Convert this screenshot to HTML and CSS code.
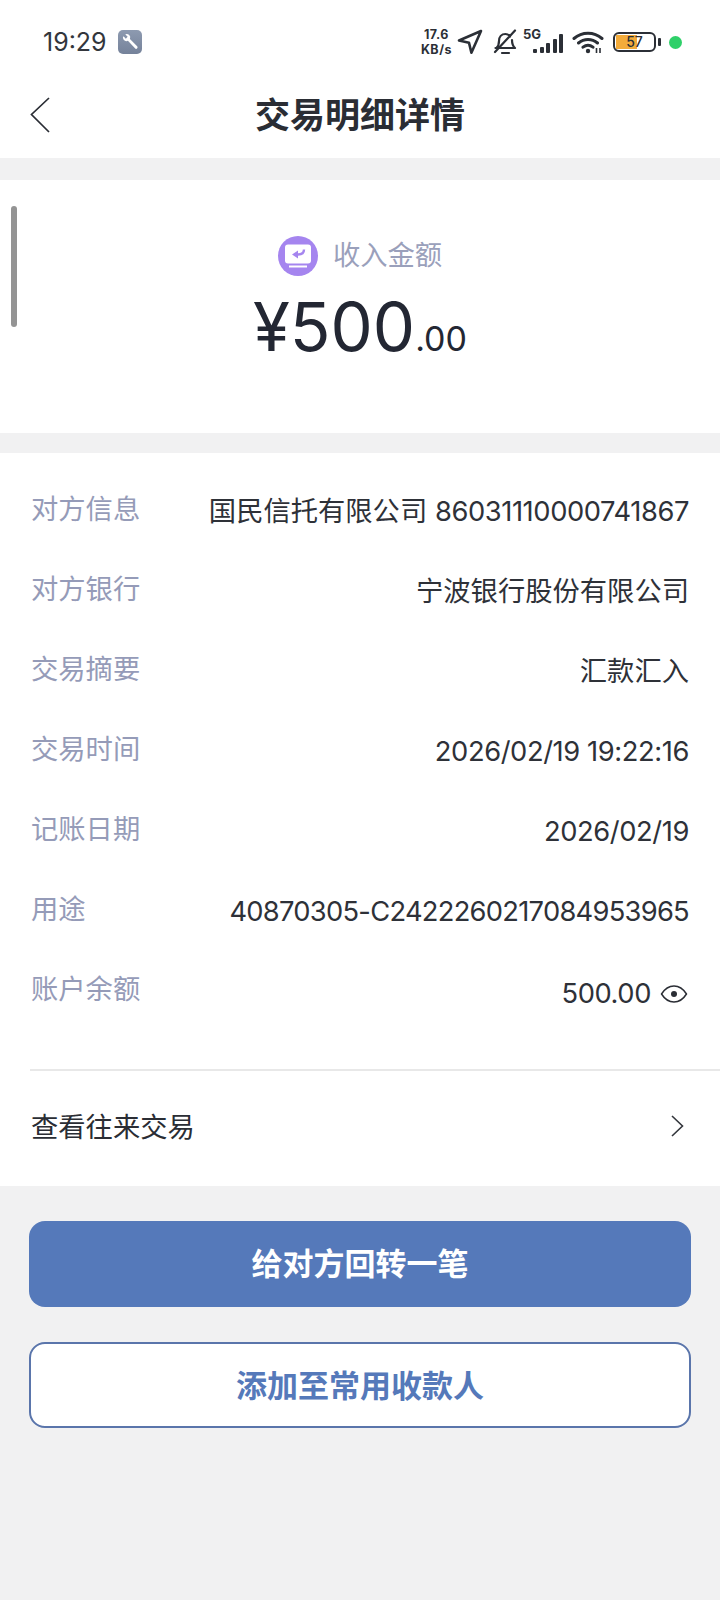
FILE: index.html
```html
<!DOCTYPE html>
<html lang="zh-CN">
<head>
<meta charset="utf-8">
<title>交易明细详情</title>
<link rel="stylesheet" href="styles.css">
</head>
<body>
<div class="page">
  <header class="top">
    <div class="status">
      <div class="status-left">
        <span class="clock">19:29</span>
        <span class="tool-badge">
          <svg viewBox="0 0 24 24" width="20" height="20"><path d="M3.500 6.600a4.300 4.300 0 0 0 6 4l8.500 9a1.700 1.700 0 0 0 2.600-2.400l-8.700-8.800A4.300 4.300 0 0 0 6.300 2.700L9.200 5.600 7 8 4.200 5z" fill="#fff"/></svg>
        </span>
      </div>
      <div class="status-right">
        <span class="speed">17.6<br>KB/s</span>
        <svg class="ic-loc" viewBox="0 0 26 26" width="26" height="26"><path d="M24 2 2 11.500l10 2.200 2.400 10z" fill="none" stroke="#2b2f36" stroke-width="2.600" stroke-linejoin="round"/></svg>
        <svg class="ic-bell" viewBox="0 0 26 26" width="26" height="26"><path d="M4.500 19c2-2 2.500-4 2.500-7 0-4 2.500-7 6.500-7 2 0 3.500 1 4.500 2.500M20 11c0 3.500.6 6 3 8H3.500M10 24h7M3 23 23 1.500" fill="none" stroke="#2b2f36" stroke-width="2.200" stroke-linecap="round" stroke-linejoin="round"/></svg>
        <span class="signal">
          <span class="fiveg">5G</span>
          <span class="bars"><i class="b1"></i><i class="b2"></i><i class="b3"></i><i class="b4"></i><i class="b5"></i></span>
        </span>
        <svg class="ic-wifi" viewBox="0 0 32 24" width="32" height="24"><path d="M2 8.500c8-7 20-7 28 0M6.500 13c5.500-4.800 13.500-4.800 19 0M11 17.200c3-2.400 7-2.400 10 0" fill="none" stroke="#2b2f36" stroke-width="3" stroke-linecap="round"/><circle cx="16" cy="21" r="2.200" fill="#2b2f36"/><path d="M24.500 18v5M28 18v5" stroke="#2b2f36" stroke-width="1.600"/></svg>
        <span class="battery"><span class="batt-shell"><span class="batt-fill"></span><span class="batt-num">57</span></span><span class="batt-cap"></span></span>
        <span class="dot"></span>
      </div>
    </div>
    <nav class="nav">
      <svg class="back" viewBox="0 0 20 36" width="20" height="36"><path d="M19 1 1.500 17.500 19 35" fill="none" stroke="#2a2d34" stroke-width="1.700"/></svg>
      <h1 class="title">交易明细详情</h1>
    </nav>
  </header>

  <section class="amount-card">
    <span class="scroll-thumb"></span>
    <div class="amount-label">
      <svg viewBox="0 0 40 40" width="40" height="40"><circle cx="20" cy="20" r="20" fill="#a585ef"/><rect x="7" y="8.500" width="26" height="19" rx="3" fill="#fff"/><rect x="11" y="29.500" width="18" height="2" fill="#fff"/><path d="M26 13.500c0 3.500-2.500 5-6 5h-1.500" fill="none" stroke="#a585ef" stroke-width="2.400"/><path d="m20 14.500-6 4 6 4z" fill="#a585ef"/></svg>
      <span>收入金额</span>
    </div>
    <div class="amount"><span class="big">¥500</span><span class="small">.00</span></div>
  </section>

  <section class="details">
    <dl class="rows">
      <div class="row"><dt>对方信息</dt><dd>国民信托有限公司 <span class="num">86031110000741867</span></dd></div>
      <div class="row"><dt>对方银行</dt><dd>宁波银行股份有限公司</dd></div>
      <div class="row"><dt>交易摘要</dt><dd>汇款汇入</dd></div>
      <div class="row"><dt>交易时间</dt><dd><span class="num">2026/02/19 19:22:16</span></dd></div>
      <div class="row"><dt>记账日期</dt><dd><span class="num">2026/02/19</span></dd></div>
      <div class="row"><dt>用途</dt><dd><span class="num num-tight">40870305-C2422260217084953965</span></dd></div>
      <div class="row"><dt>账户余额</dt><dd class="with-eye"><span class="num">500.00</span>
        <svg viewBox="0 0 28 20" width="28" height="20"><path d="M1.500 10C5 4.500 9 2 14 2s9 2.500 12.500 8C23 15.500 19 18 14 18S5 15.500 1.500 10z" fill="none" stroke="#2a2d34" stroke-width="1.500" stroke-linejoin="round"/><circle cx="14" cy="10" r="3" fill="#2a2d34"/></svg></dd></div>
    </dl>
    <div class="link-row">
      <span>查看往来交易</span>
      <svg viewBox="0 0 14 24" width="14" height="24"><path d="M2 2l10.500 10L2 22" fill="none" stroke="#33363c" stroke-width="1.600"/></svg>
    </div>
  </section>

  <div class="actions">
    <button class="btn primary">给对方回转一笔</button>
    <button class="btn outline">添加至常用收款人</button>
  </div>
</div>
</body>
</html>
```
FILE: styles.css
```css
* { box-sizing: border-box; }
html, body { margin: 0; padding: 0; }
body {
  width: 720px;
  height: 1600px;
  overflow: hidden;
  background: #f1f1f2;
  font-family: "Inter", "Noto Sans CJK SC", sans-serif;
  color: #2a2d34;
}
.page { display: flex; flex-direction: column; height: 100%; }

.top { background: #fff; height: 158px; display: flex; flex-direction: column; }
.status {
  height: 84px;
  padding: 0 38px 0 43px;
  display: flex;
  align-items: center;
  justify-content: space-between;
}
.status-left { display: flex; align-items: center; gap: 11px; }
.clock { font-size: 25px; color: #33363c; }
.tool-badge {
  width: 24px; height: 24px; border-radius: 5px;
  background: linear-gradient(#8d9ab0, #75829a);
  display: flex; align-items: center; justify-content: center;
}
.status-right { display: flex; align-items: center; }
.speed {
  display: block; text-align: center;
  font-size: 12.500px; font-weight: 700; line-height: 15.500px; letter-spacing: .5px; color: #2b2f36;
  margin-right: 5px;
}
.ic-loc { margin-right: 9px; }
.ic-bell { margin-right: 5px; }
.signal { position: relative; display: block; width: 40px; height: 28px; margin-right: 9px; }
.fiveg { position: absolute; left: 0; top: -2px; font-size: 13px; font-weight: 700; color: #2b2f36; }
.bars { position: absolute; right: 0; bottom: 3px; display: flex; align-items: flex-end; gap: 2.500px; }
.bars i { display: block; width: 4px; background: #2b2f36; border-radius: 1px; }
.b1 { height: 4px; } .b2 { height: 6px; } .b3 { height: 10px; } .b4 { height: 14px; } .b5 { height: 19px; }
.ic-wifi { margin-right: 9px; }
.battery { display: flex; align-items: center; gap: 2px; margin-right: 8px; }
.batt-shell {
  position: relative; display: block; width: 43px; height: 20px;
  border: 2px solid #2b2f36; border-radius: 6px; overflow: hidden;
}
.batt-fill { position: absolute; left: 1px; top: 1px; bottom: 1px; width: 21px; background: #f3ab3a; }
.batt-num {
  position: absolute; inset: 0; text-align: center;
  font-size: 14px; line-height: 16px; font-weight: 500; color: #2b2f36;
}
.batt-cap { width: 3px; height: 8px; background: #2b2f36; border-radius: 1px; }
.dot { width: 13px; height: 13px; border-radius: 50%; background: #2fd069; }

.nav {
  flex: 1;
  position: relative;
  display: flex;
  align-items: center;
  justify-content: center;
  padding-bottom: 12px;
}
.back { position: absolute; left: 30px; top: 13px; }
.title { margin: 0; font-size: 35px; font-weight: 700; color: #2a2d34; line-height: 40px; }

.amount-card {
  position: relative;
  margin-top: 22px;
  height: 253px;
  background: #fff;
  display: flex;
  flex-direction: column;
  align-items: center;
  padding-top: 56px;
}
.scroll-thumb {
  position: absolute; left: 11px; top: 26px;
  width: 6px; height: 121px; border-radius: 3px; background: #949494;
}
.amount-label {
  display: flex; align-items: center; gap: 15px;
  font-size: 27.300px; color: #9aa0bb; line-height: 40px;
}
.amount { display: flex; align-items: baseline; margin-top: 9px; color: #232733; line-height: 84px; }
.big { font-size: 67px; }
.small { font-size: 34px; }

.details { margin-top: 20px; background: #fff; height: 733px; display: flex; flex-direction: column; padding-left: 30px; }
.rows { margin: 0; padding: 16px 31px 0 1px; height: 616px; }
.row { display: flex; justify-content: space-between; align-items: flex-start; height: 80px; padding-top: 22px; }
.row dt { font-size: 27.300px; line-height: 38px; color: #959bb8; }
.row dd { margin: 0; font-size: 27.300px; line-height: 40px; padding-top: 1px; color: #2e3138; text-align: right; }
.num { letter-spacing: -.4px; }
.num-tight { letter-spacing: -.72px; }
.with-eye { display: flex; align-items: center; gap: 9px; padding-top: 3px !important; padding-right: 1px; }
.link-row {
  flex: 1;
  border-top: 2px solid #e8e8e8;
  padding: 0 36px 8px 1px;
  display: flex; align-items: center; justify-content: space-between;
  font-size: 27.300px;
  color: #2a2d34;
}
.link-row svg { margin-top: 2px; }

.actions { display: flex; flex-direction: column; gap: 35px; padding: 35px 29px 0; }
.btn {
  height: 86px;
  border-radius: 16px;
  font-family: inherit;
  font-size: 31px;
  font-weight: 700;
}
.primary { background: #5579ba; border: 0; color: #fff; padding-bottom: 6px; }
.outline { background: #fff; border: 2px solid #5a75ab; color: #5579ba; padding-bottom: 4px; }
```
